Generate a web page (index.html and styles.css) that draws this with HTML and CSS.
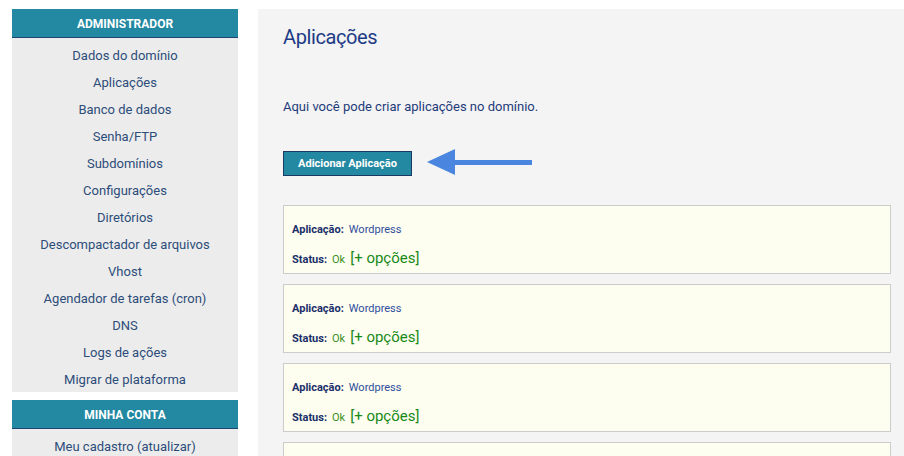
FILE: index.html
```html
<!DOCTYPE html>
<html lang="pt-BR">
<head>
<meta charset="utf-8">
<title>Aplicações</title>
<link rel="stylesheet" href="styles.css">
</head>
<body>
<div class="layout">
  <aside class="sidebar">
    <section class="menu">
      <h3 class="menu-title">ADMINISTRADOR</h3>
      <ul class="menu-list">
        <li><a href="#">Dados do domínio</a></li>
        <li><a href="#">Aplicações</a></li>
        <li><a href="#">Banco de dados</a></li>
        <li><a href="#">Senha/FTP</a></li>
        <li><a href="#">Subdomínios</a></li>
        <li><a href="#">Configurações</a></li>
        <li><a href="#">Diretórios</a></li>
        <li><a href="#">Descompactador de arquivos</a></li>
        <li><a href="#">Vhost</a></li>
        <li><a href="#">Agendador de tarefas (cron)</a></li>
        <li><a href="#">DNS</a></li>
        <li><a href="#">Logs de ações</a></li>
        <li><a href="#">Migrar de plataforma</a></li>
      </ul>
    </section>
    <section class="menu">
      <h3 class="menu-title">MINHA CONTA</h3>
      <ul class="menu-list">
        <li><a href="#">Meu cadastro (atualizar)</a></li>
      </ul>
    </section>
  </aside>
  <main class="content">
    <h1 class="page-title">Aplicações</h1>
    <p class="intro">Aqui você pode criar aplicações no domínio.</p>
    <div class="actions">
      <button class="btn">Adicionar Aplicação</button>
      <svg class="arrow" width="106" height="30" viewBox="0 0 106 30">
        <polygon points="0,14 28,1 28,27" fill="#4a86e0"/>
        <rect x="27" y="12" width="78" height="5" fill="#4a86e0"/>
      </svg>
    </div>
    <div class="app">
      <div class="row"><span class="label">Aplicação:</span> <span class="value">Wordpress</span></div>
      <div class="row"><span class="label">Status:</span> <span class="ok">Ok</span> <a class="opts" href="#">[+ opções]</a></div>
    </div>
    <div class="app">
      <div class="row"><span class="label">Aplicação:</span> <span class="value">Wordpress</span></div>
      <div class="row"><span class="label">Status:</span> <span class="ok">Ok</span> <a class="opts" href="#">[+ opções]</a></div>
    </div>
    <div class="app">
      <div class="row"><span class="label">Aplicação:</span> <span class="value">Wordpress</span></div>
      <div class="row"><span class="label">Status:</span> <span class="ok">Ok</span> <a class="opts" href="#">[+ opções]</a></div>
    </div>
    <div class="app"></div>
  </main>
</div>
</body>
</html>
```
FILE: styles.css
```css
html, body {
  margin: 0;
  padding: 0;
  background: #ffffff;
  font-family: Roboto, "Noto Sans", sans-serif;
}
body {
  padding: 9px 0 0 12px;
  overflow: hidden;
  height: 456px;
  box-sizing: border-box;
}
.layout {
  display: flex;
  gap: 20px;
  align-items: flex-start;
}
.sidebar {
  width: 226px;
  flex: none;
  display: flex;
  flex-direction: column;
  gap: 8px;
}
.menu-title {
  margin: 0;
  height: 28px;
  line-height: 31px;
  background: #2388a1;
  border-bottom: 1px solid #1d4670;
  color: #ffffff;
  font-size: 12px;
  font-weight: 700;
  text-align: center;
}
.menu-list {
  list-style: none;
  margin: 0;
  padding: 3px 0 0;
  background: #ececec;
}
.menu-list li {
  height: 27px;
  line-height: 27px;
  text-align: center;
}
.menu-list a {
  color: #2c4d7a;
  text-decoration: none;
  font-size: 13px;
}
.content {
  flex: 1;
  background: #f4f4f4;
  padding: 14px 13px 0 25px;
  min-height: 460px;
}
.page-title {
  margin: 0;
  font-size: 20px;
  letter-spacing: -0.4px;
  font-weight: 400;
  color: #1e3b86;
  line-height: 28px;
}
.intro {
  margin: 47px 0 0;
  font-size: 13px;
  line-height: 18px;
  color: #1e3b7a;
}
.actions {
  margin-top: 32px;
  display: flex;
  align-items: center;
  gap: 15px;
}
.btn {
  width: 129px;
  height: 25px;
  padding: 0;
  background: #2388a1;
  border: 1px solid #183a63;
  color: #ffffff;
  font-family: inherit;
  font-size: 11px;
  font-weight: 700;
}
.arrow {
  display: block;
}
.app {
  margin-top: 27px;
  background: #fdfdf0;
  border: 1px solid #cccccc;
  padding: 14px 8px 0;
  box-sizing: border-box;
  height: 69px;
  display: flex;
  flex-direction: column;
  gap: 8px;
}
.app + .app {
  margin-top: 10px;
}
.row {
  font-size: 11px;
  line-height: 20px;
  display: flex;
  align-items: baseline;
  gap: 5px;
}
.label {
  font-weight: 700;
  color: #1b2f6a;
}
.value {
  color: #2f4f9c;
}
.ok {
  color: #3a8f1e;
}
.opts {
  color: #198a18;
  font-size: 15px;
  text-decoration: none;
}
```
